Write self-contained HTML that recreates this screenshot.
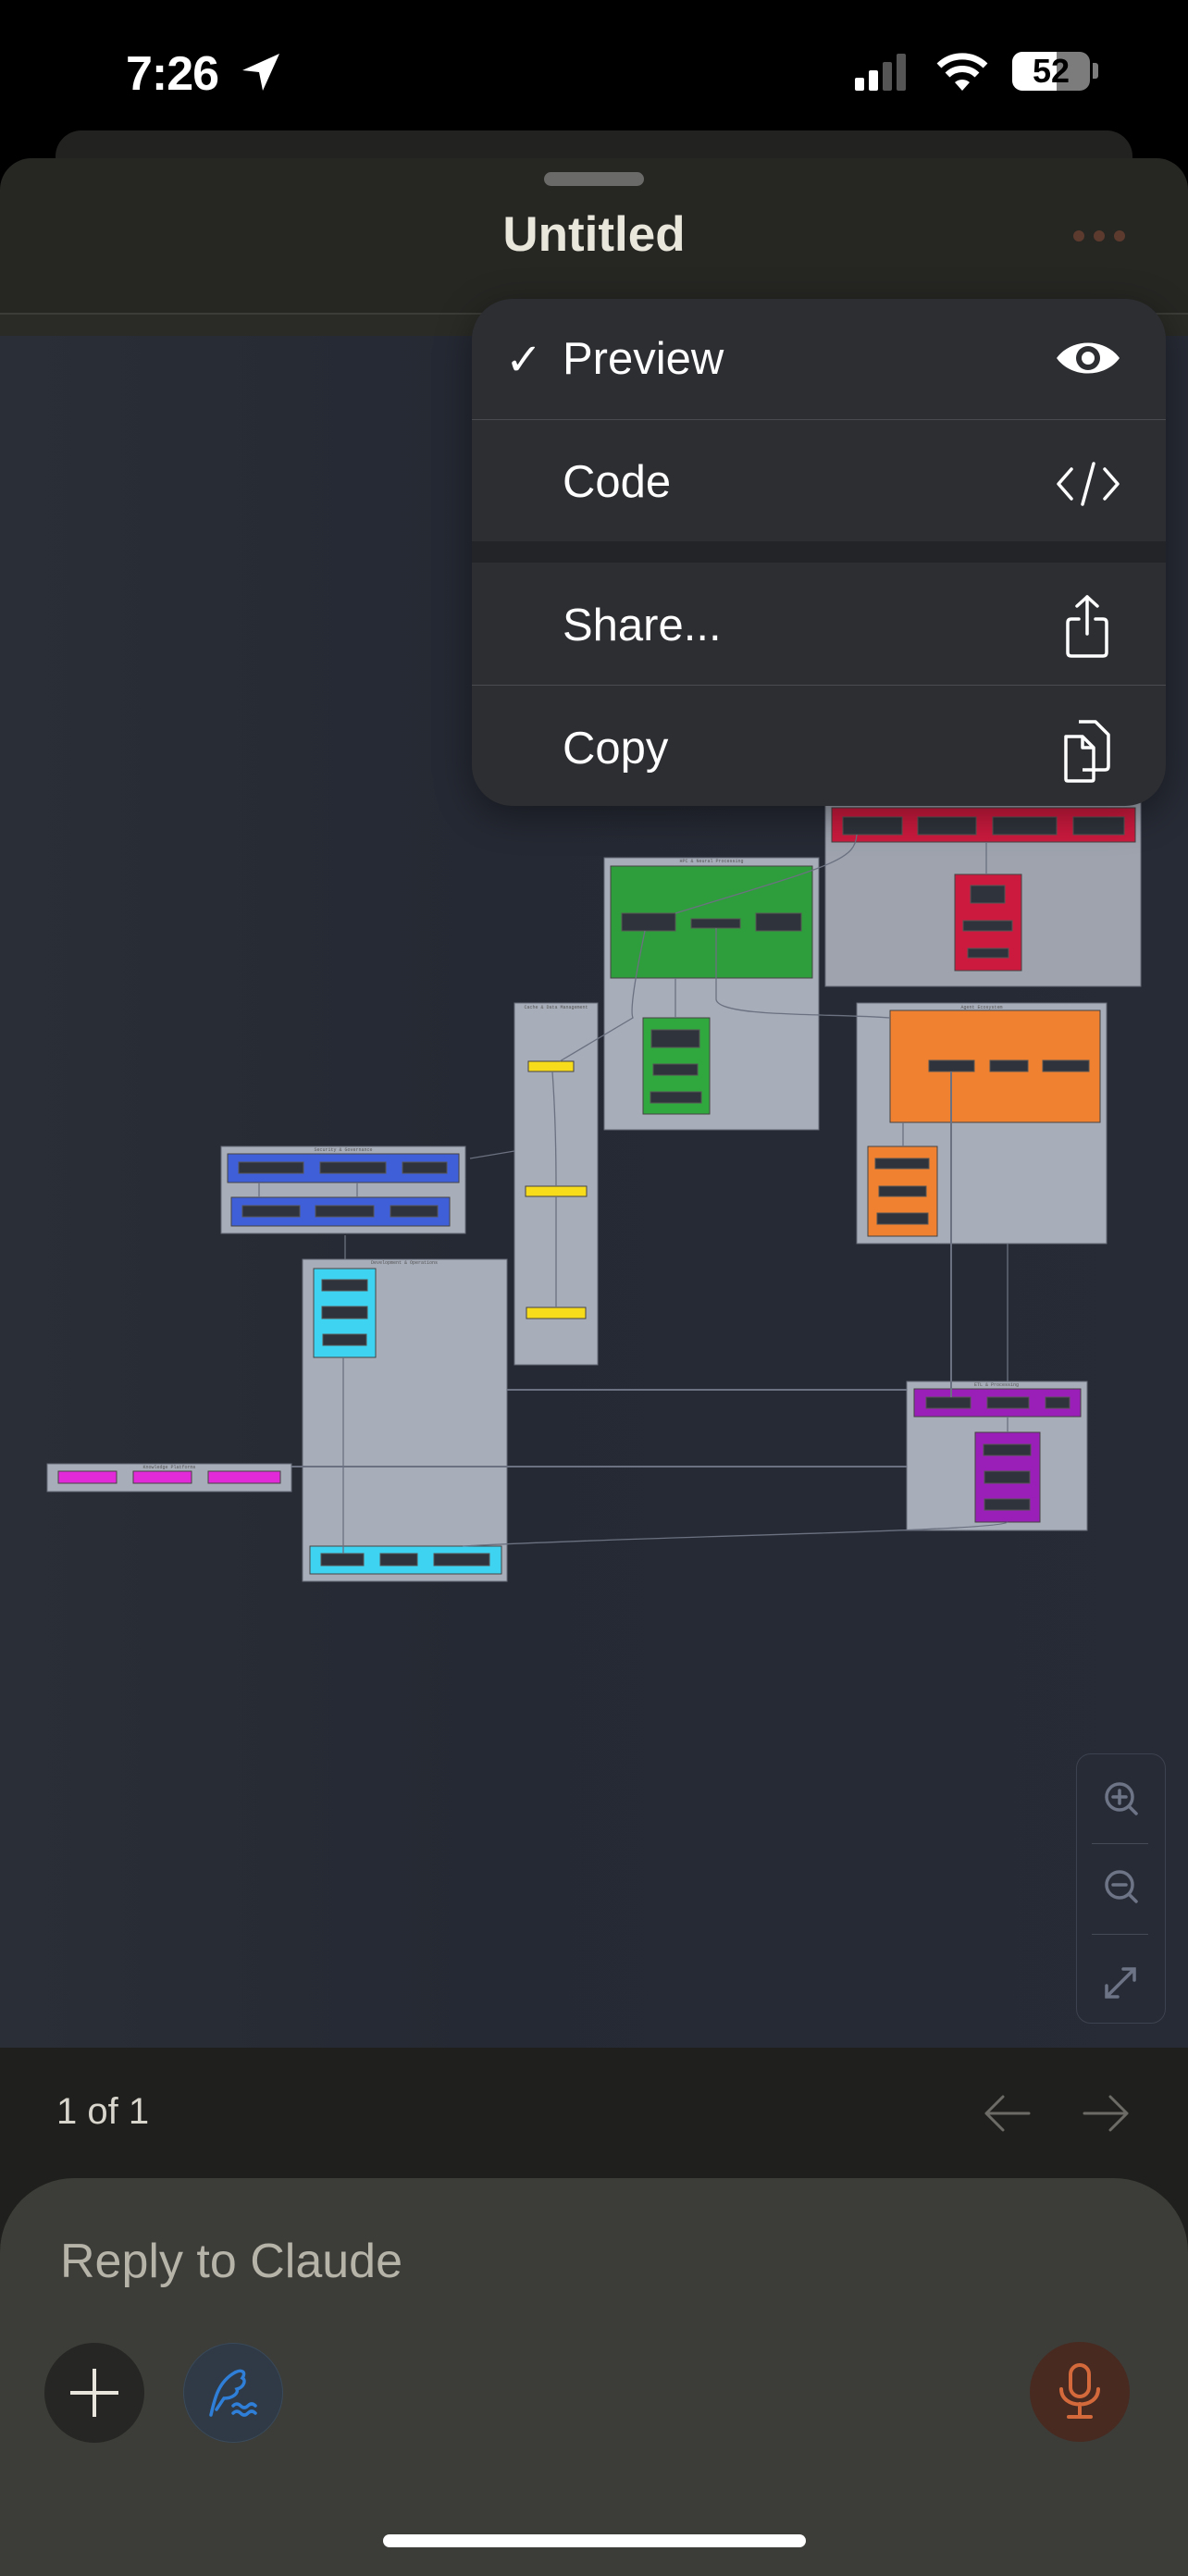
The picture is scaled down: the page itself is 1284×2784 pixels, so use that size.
<!DOCTYPE html>
<html><head><meta charset="utf-8"><style>
*{margin:0;padding:0;box-sizing:border-box}
body{width:1284px;height:2778px;background:#000;position:relative;overflow:hidden;font-family:"Liberation Sans",sans-serif}
.abs{position:absolute}
</style></head><body>
<!-- status bar -->
<div class="abs" style="left:136px;top:50px;color:#fff;font-size:52px;font-weight:600;letter-spacing:-1px">7:26</div>
<svg class="abs" style="left:258px;top:56px" width="48" height="44" viewBox="0 0 48 44"><path d="M44 2 L4 20 L22 22 L26 42 Z" fill="#fff"/></svg>
<svg class="abs" style="left:920px;top:56px" width="80" height="44"><rect x="4" y="28" width="10" height="14" rx="2" fill="#fff"/><rect x="19" y="20" width="10" height="22" rx="2" fill="#fff"/><rect x="34" y="11" width="10" height="31" rx="2" fill="#555"/><rect x="49" y="2" width="10" height="40" rx="2" fill="#555"/></svg>
<svg class="abs" style="left:1010px;top:54px" width="60" height="46" viewBox="0 0 60 46"><path d="M30 44 L22 35 A12 12 0 0 1 38 35Z" fill="#fff"/><path d="M14 27 A23 23 0 0 1 46 27" stroke="#fff" stroke-width="7" fill="none"/><path d="M5 17 A36 36 0 0 1 55 17" stroke="#fff" stroke-width="7" fill="none"/></svg>
<div class="abs" style="left:1094px;top:56px;width:84px;height:42px;border-radius:11px;background:#7c7c7c;overflow:hidden"><div style="width:48px;height:42px;background:#fff"></div></div>
<div class="abs" style="left:1094px;top:56px;width:84px;height:42px;text-align:center;font-size:36px;font-weight:700;line-height:42px;color:#000">52</div>
<div class="abs" style="left:1181px;top:68px;width:6px;height:17px;border-radius:0 3px 3px 0;background:#7c7c7c"></div>

<!-- back card -->
<div class="abs" style="left:60px;top:141px;width:1164px;height:60px;border-radius:28px 28px 0 0;background:#222220"></div>
<!-- sheet header -->
<div class="abs" style="left:0;top:171px;width:1284px;height:200px;border-radius:34px 34px 0 0;background:#262623"></div>
<div class="abs" style="left:588px;top:186px;width:108px;height:15px;border-radius:8px;background:#6a6a68"></div>
<div class="abs" style="left:0;top:223px;width:1284px;text-align:center;color:#e9e6dc;font-size:53px;font-weight:700">Untitled</div>
<div class="abs" style="left:1160px;top:249px;width:12px;height:12px;border-radius:6px;background:#5c3b2e"></div>
<div class="abs" style="left:1182px;top:249px;width:12px;height:12px;border-radius:6px;background:#5c3b2e"></div>
<div class="abs" style="left:1204px;top:249px;width:12px;height:12px;border-radius:6px;background:#5c3b2e"></div>
<div class="abs" style="left:0;top:338px;width:1284px;height:25px;background:#2a2a26;border-top:2px solid #3c3c38"></div>

<!-- diagram canvas -->
<div class="abs" style="left:0;top:363px;width:1284px;height:1850px;background:linear-gradient(90deg,#2a2e36,#252933 40%,#272b35)"></div>
<svg class="abs" style="left:0;top:0" width="1284" height="2213" font-family="Liberation Mono,monospace" font-size="5" fill="#ccc">
<g stroke="#666b78" stroke-width="1">
<rect x="892" y="866" width="341" height="200" fill="#9ea3ae"/>
<rect x="653" y="927" width="232" height="294" fill="#a7adb9"/>
<rect x="556" y="1084" width="90" height="391" fill="#a7adb9"/>
<rect x="926" y="1084" width="270" height="260" fill="#a7adb9"/>
<rect x="239" y="1239" width="264" height="94" fill="#a7adb9"/>
<rect x="327" y="1361" width="221" height="348" fill="#a7adb9"/>
<rect x="980" y="1493" width="195" height="161" fill="#a7adb9"/>
<rect x="51" y="1582" width="264" height="30" fill="#a7adb9"/>
</g>
<g stroke="#444">
<rect x="899" y="873" width="328" height="37" fill="#cc1a3e"/>
<rect x="1032" y="945" width="72" height="104" fill="#cc1a3e"/>
<rect x="660" y="936" width="218" height="121" fill="#2e9e3c"/>
<rect x="695" y="1100" width="72" height="104" fill="#31a83e"/>
<rect x="962" y="1092" width="227" height="121" fill="#ef8130"/>
<rect x="938" y="1239" width="75" height="97" fill="#ef8130"/>
<rect x="246" y="1247" width="250" height="31" fill="#3f5fd8"/>
<rect x="250" y="1294" width="236" height="31" fill="#3f5fd8"/>
<rect x="339" y="1371" width="67" height="96" fill="#3fd3f2"/>
<rect x="335" y="1671" width="207" height="30" fill="#3fd3f2"/>
<rect x="988" y="1501" width="180" height="30" fill="#9a1eb8"/>
<rect x="1054" y="1548" width="70" height="97" fill="#9a1eb8"/>
<rect x="571" y="1147" width="49" height="11" fill="#f7dc1c"/>
<rect x="568" y="1282" width="66" height="11" fill="#f7dc1c"/>
<rect x="569" y="1413" width="64" height="12" fill="#f7dc1c"/>
<rect x="63" y="1590" width="63" height="13" fill="#e22ad8"/>
<rect x="144" y="1590" width="63" height="13" fill="#e22ad8"/>
<rect x="225" y="1590" width="78" height="13" fill="#e22ad8"/>
</g>
<g fill="#2f333b" stroke="#555">
<rect x="911" y="883" width="64" height="19"/><rect x="992" y="883" width="63" height="19"/><rect x="1073" y="883" width="69" height="19"/><rect x="1160" y="883" width="55" height="19"/>
<rect x="1049" y="957" width="37" height="19"/><rect x="1041" y="995" width="53" height="11"/><rect x="1046" y="1025" width="44" height="10"/>
<rect x="672" y="987" width="58" height="19"/><rect x="747" y="993" width="53" height="10"/><rect x="817" y="987" width="49" height="19"/>
<rect x="704" y="1113" width="52" height="19"/><rect x="706" y="1150" width="48" height="12"/><rect x="703" y="1180" width="55" height="12"/>
<rect x="1004" y="1146" width="49" height="12"/><rect x="1070" y="1146" width="41" height="12"/><rect x="1127" y="1146" width="50" height="12"/>
<rect x="946" y="1252" width="58" height="11"/><rect x="950" y="1282" width="51" height="11"/><rect x="948" y="1311" width="55" height="12"/>
<rect x="258" y="1256" width="70" height="12"/><rect x="346" y="1256" width="71" height="12"/><rect x="435" y="1256" width="48" height="12"/>
<rect x="262" y="1303" width="62" height="12"/><rect x="341" y="1303" width="63" height="12"/><rect x="422" y="1303" width="51" height="12"/>
<rect x="348" y="1383" width="49" height="12"/><rect x="348" y="1412" width="49" height="13"/><rect x="349" y="1442" width="47" height="12"/>
<rect x="347" y="1679" width="46" height="13"/><rect x="411" y="1679" width="40" height="13"/><rect x="469" y="1679" width="60" height="13"/>
<rect x="1001" y="1510" width="48" height="12"/><rect x="1067" y="1510" width="45" height="12"/><rect x="1130" y="1510" width="26" height="12"/>
<rect x="1063" y="1561" width="51" height="12"/><rect x="1064" y="1590" width="49" height="13"/><rect x="1064" y="1620" width="49" height="12"/>
</g>
<g stroke="#6b7180" stroke-width="1.3" fill="none">
<path d="M926 902 C924 930 900 935 730 987"/><path d="M1066 910 V945"/>
<path d="M697 1006 C690 1040 680 1090 684 1100 L605 1147"/><path d="M730 1057 V1100"/>
<path d="M774 1003 V1080 C776 1100 900 1095 962 1100"/>
<path d="M597 1158 C600 1200 601 1240 601 1282"/><path d="M601 1293 V1413"/>
<path d="M556 1244 L508 1252"/><path d="M976 1213 V1239"/>
<path d="M1028 1158 V1510" stroke-width="2"/><path d="M1089 1344 V1493"/>
<path d="M373 1335 V1361"/><path d="M371 1467 V1679"/>
<path d="M548 1502 H980" stroke-width="2"/><path d="M980 1585 H315" stroke-width="2"/>
<path d="M1089 1531 V1548"/><path d="M1089 1645 C1080 1655 700 1660 500 1671"/>
<path d="M386 1278 V1294"/><path d="M280 1278 V1294"/>
</g>
<g font-size="5" fill="#555" text-anchor="middle"><text x="769" y="932">HPC &amp; Neural Processing</text><text x="601" y="1090">Cache &amp; Data Management</text><text x="1061" y="1090">Agent Ecosystem</text><text x="371" y="1244">Security &amp; Governance</text><text x="437" y="1366">Development &amp; Operations</text><text x="1077" y="1498">ETL &amp; Processing</text><text x="183" y="1587">Knowledge Platforms</text></g>
</svg>

<!-- menu -->
<div class="abs" style="left:510px;top:323px;width:750px;height:548px;border-radius:44px;background:#2d2e32;overflow:hidden;box-shadow:0 10px 40px rgba(0,0,0,.4)">
 <div class="abs" style="left:0;top:130px;width:750px;height:1px;background:#4a4b50"></div>
 <div class="abs" style="left:0;top:262px;width:750px;height:23px;background:#232427"></div>
 <div class="abs" style="left:0;top:417px;width:750px;height:1px;background:#4a4b50"></div>
 <div class="abs" style="left:36px;top:38px;color:#fff;font-size:48px">✓</div>
 <div class="abs" style="left:98px;top:37px;color:#fff;font-size:49px">Preview</div>
 <div class="abs" style="left:98px;top:170px;color:#fff;font-size:49px">Code</div>
 <div class="abs" style="left:98px;top:325px;color:#fff;font-size:49px">Share...</div>
 <div class="abs" style="left:98px;top:458px;color:#fff;font-size:49px">Copy</div>
 <svg class="abs" style="left:630px;top:40px" width="72" height="48"><path d="M2 24 C18 2 54 2 70 24 C54 46 18 46 2 24Z" fill="#fff"/><circle cx="36" cy="24" r="13" fill="#2d2e32"/><circle cx="36" cy="24" r="7" fill="#fff"/></svg>
 <svg class="abs" style="left:630px;top:172px" width="72" height="56" fill="none" stroke="#fff" stroke-width="3.5" stroke-linecap="round" stroke-linejoin="round"><path d="M18 12 L4 28 L18 44"/><path d="M54 12 L68 28 L54 44"/><path d="M42 6 L30 50"/></svg>
 <svg class="abs" style="left:640px;top:318px" width="50" height="72" fill="none" stroke="#fff" stroke-width="3.5" stroke-linecap="round" stroke-linejoin="round"><path d="M25 4 V44"/><path d="M14 14 L25 4 L36 14"/><path d="M16 28 H8 Q4 28 4 32 V64 Q4 68 8 68 H42 Q46 68 46 64 V32 Q46 28 42 28 H34"/></svg>
 <svg class="abs" style="left:638px;top:453px" width="56" height="72" fill="none" stroke="#fff" stroke-width="3.5" stroke-linejoin="round"><path d="M18 4 H36 L50 18 V52 Q50 56 46 56 H22"/><path d="M4 20 H22 L34 32 V66 Q34 68 32 68 H6 Q4 68 4 66 Z"/><path d="M22 20 V32 H34"/></svg>
</div>

<!-- zoom controls -->
<div class="abs" style="left:1163px;top:1895px;width:97px;height:292px;border:1.5px solid #3d4250;border-radius:16px;background:#272b35"></div>
<div class="abs" style="left:1180px;top:1992px;width:61px;height:1px;background:#464b58"></div>
<div class="abs" style="left:1180px;top:2090px;width:61px;height:1px;background:#464b58"></div>
<svg class="abs" style="left:1190px;top:1920px" width="44" height="250" fill="none" stroke="#6d7486" stroke-width="3.5" stroke-linecap="round"><circle cx="20" cy="22" r="14"/><path d="M30 32 L38 40 M20 15 V29 M13 22 H27"/><circle cx="20" cy="117" r="14"/><path d="M30 127 L38 135 M13 117 H27"/><path d="M6 238 L36 208 M24 208 H36 V220 M6 226 V238 H18"/></svg>

<!-- footer -->
<div class="abs" style="left:0;top:2213px;width:1284px;height:565px;background:#1f1f1d"></div>
<div class="abs" style="left:61px;top:2260px;color:#d8d5cc;font-size:40px">1 of 1</div>
<svg class="abs" style="left:1060px;top:2262px" width="160" height="44" fill="none" stroke="#6c6b66" stroke-width="3" stroke-linecap="round" stroke-linejoin="round"><path d="M6 22 H52 M24 4 L6 22 L24 40"/><path d="M112 22 H158 M140 4 L158 22 L140 40"/></svg>
<div class="abs" style="left:0;top:2354px;width:1284px;height:430px;border-radius:80px 80px 0 0;background:#3c3c38"></div>
<div class="abs" style="left:65px;top:2414px;color:#b6b3a9;font-size:52px">Reply to Claude</div>
<div class="abs" style="left:48px;top:2532px;width:108px;height:108px;border-radius:54px;background:#262624"></div>
<svg class="abs" style="left:74px;top:2558px" width="56" height="56" stroke="#e8e5dc" stroke-width="4"><path d="M28 2 V54 M2 28 H54"/></svg>
<div class="abs" style="left:198px;top:2532px;width:108px;height:108px;border-radius:54px;background:#2f3a46;border:1px solid #3a4a5a"></div>
<svg class="abs" style="left:222px;top:2556px" width="60" height="60" fill="none" stroke="#2f7fd8" stroke-width="3.5" stroke-linecap="round"><path d="M6 54 C10 36 14 18 32 8 C40 4 44 8 40 14 C44 16 42 24 34 26 C36 30 30 36 20 36 L12 48"/><path d="M30 44 q4 -4 8 0 q4 4 8 0 q4 -4 8 0 M30 52 q4 -4 8 0 q4 4 8 0 q4 -4 8 0"/></svg>
<div class="abs" style="left:1113px;top:2531px;width:108px;height:108px;border-radius:54px;background:#482a20"></div>
<svg class="abs" style="left:1141px;top:2552px" width="52" height="66" fill="none" stroke="#d46a3c" stroke-width="4" stroke-linecap="round"><rect x="16" y="4" width="20" height="34" rx="10"/><path d="M6 30 C6 52 46 52 46 30 M26 46 V60 M14 60 H38"/></svg>
<div class="abs" style="left:414px;top:2739px;width:457px;height:14px;border-radius:7px;background:#fff"></div>
</body></html>
